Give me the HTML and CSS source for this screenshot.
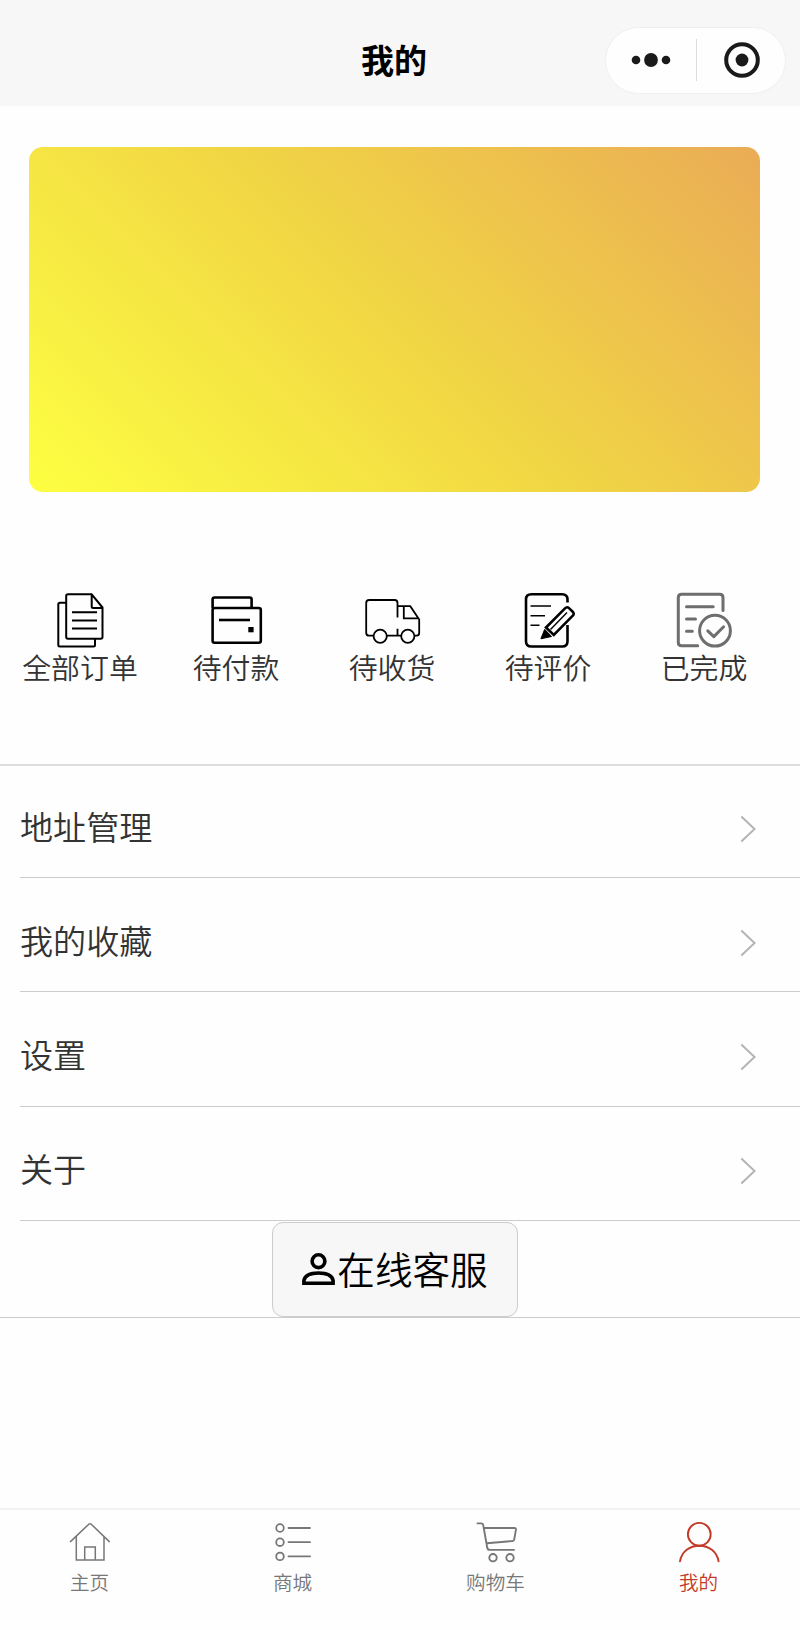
FILE: index.html
```
<!DOCTYPE html>
<html lang="zh-CN">
<head>
    <meta charset="UTF-8">
    <meta name="viewport" content="width=device-width, initial-scale=1.0">
    <title>我的</title>
    <link rel="stylesheet" href="styles.css">
</head>
<body>
    <div class="page">
        <header class="navbar">
            <h1 class="navbar-title">我的</h1>
            <div class="capsule">
                <svg class="capsule-icon" width="40" height="40" viewBox="0 0 40 40" fill="#1a1a1a">
                    <circle cx="5" cy="20" r="4.3"/>
                    <circle cx="20" cy="20" r="6.9"/>
                    <circle cx="35" cy="20" r="4.3"/>
                </svg>
                <span class="capsule-line"></span>
                <svg class="capsule-icon" width="40" height="40" viewBox="0 0 40 40">
                    <circle cx="20" cy="20" r="15.8" fill="none" stroke="#1a1a1a" stroke-width="4"/>
                    <circle cx="20" cy="20" r="6.4" fill="#1a1a1a"/>
                </svg>
            </div>
        </header>

        <main class="content">
            <div class="card"></div>

            <div class="orders">
                <a class="order">
                    <svg class="order-icon" viewBox="0 0 60 60" stroke-width="2">
                        <path d="M16 12.7H10q-1.7 0-1.7 1.7V55q0 1.5 1.7 1.5H43.5q1.5 0 1.5-1.5v-6.5"/>
                        <path d="M41.7 4.3H18q-1.8 0-1.8 1.8V47q0 1.7 1.8 1.7H50.7q1.8 0 1.8-1.7V17.5L41.7 4.3V16.5q0 1.5 1.5 1.5H52.5" stroke-linejoin="round"/>
                        <path d="M22 22.3H47M22 30.4H47M22 38.5H47"/>
                    </svg>
                    <span>全部订单</span>
                </a>
                <a class="order">
                    <svg class="order-icon" viewBox="0 0 60 60" stroke-width="2.6">
                        <path d="M6.6 18V9.5q0-2 2-2H43.6q2 0 2 2V18"/>
                        <rect x="6.6" y="18" width="48.2" height="34.8" rx="2"/>
                        <path d="M13 30H44"/>
                        <rect x="42.3" y="37" width="5.3" height="5.3" fill="#000" stroke="none"/>
                    </svg>
                    <span>待付款</span>
                </a>
                <a class="order">
                    <svg class="order-icon" viewBox="0 0 60 60" stroke-width="1.8">
                        <path d="M11.6 45.7H7.2q-3 0-3-3V13q0-3 3-3H32.7q2.8 0 2.8 3V27.5M35.5 38.7v7M24.8 45.7H39.2M35.5 16.2H48.3L57.2 29.5V43q0 2.7-2.7 2.7H52.4M41.8 16.2V28.3H56.6"/>
                        <circle cx="18.2" cy="46.3" r="6.6"/>
                        <circle cx="45.8" cy="46.3" r="6.6"/>
                    </svg>
                    <span>待收货</span>
                </a>
                <a class="order">
                    <svg class="order-icon" viewBox="0 0 60 60" stroke-width="2.6">
                        <path d="M49.500 12.5V9.5q0-5.3-5.3-5.3H13.500q-5.5 0-5.5 5.3V51.2q0 5.3 5.5 5.3H44.200q5.3 0 5.3-5.3V35"/>
                        <path d="M12.500 16H33M12.500 25.7H27M12.500 35.3H21.500" stroke-width="1.6"/>
                        <path d="M28 37.5 47 18.3q2-2 4-.2l3.7 3.6q2 2 .1 3.9L35.800 45Z"/>
                        <path d="M32.500 39.6 49 22.6" stroke-width="1.4"/>
                        <path d="M26.700 39.3 33.500 46.5 22.900 48.8Z" fill="#000" stroke-width="1"/>
                    </svg>
                    <span>待评价</span>
                </a>
                <a class="order">
                    <svg class="order-icon order-icon-done" viewBox="0 0 60 60" stroke-width="3">
                        <path d="M49 20.5V7.5q0-3.3-3.3-3.3H7.6Q4.3 4.2 4.3 7.5V52.4q0 3.3 3.3 3.3H23.7M12.5 16.7H39.2M12.5 29H21.5M12.5 41.3H18.3"/>
                        <circle cx="41" cy="40.7" r="15.4"/>
                        <path d="M33.8 40.8 39.8 46.6 49.6 36.8"/>
                    </svg>
                    <span>已完成</span>
                </a>
            </div>

            <div class="menu">
                <a class="menu-item"><span>地址管理</span>
                    <svg class="arrow" viewBox="0 0 16 28"><path d="M1.3 1.5 14.6 14 1.3 26.5"/></svg>
                </a>
                <a class="menu-item"><span>我的收藏</span>
                    <svg class="arrow" viewBox="0 0 16 28"><path d="M1.3 1.5 14.6 14 1.3 26.5"/></svg>
                </a>
                <a class="menu-item"><span>设置</span>
                    <svg class="arrow" viewBox="0 0 16 28"><path d="M1.3 1.5 14.6 14 1.3 26.5"/></svg>
                </a>
                <a class="menu-item"><span>关于</span>
                    <svg class="arrow" viewBox="0 0 16 28"><path d="M1.3 1.5 14.6 14 1.3 26.5"/></svg>
                </a>
                <div class="service">
                    <button class="service-button">
                        <svg class="service-icon" viewBox="0 0 34 36">
                            <circle cx="17.5" cy="9.2" r="6.4"/>
                            <path d="M2.9 31.2V28.5C3.9 23.5 9.5 21 17.5 21S31.1 23.5 32.1 28.5V31.2Z"/>
                        </svg>
                        <span>在线客服</span>
                    </button>
                </div>
            </div>
        </main>

        <nav class="tabbar">
            <a class="tab">
                <svg class="tab-icon" viewBox="0 0 44 44" stroke-width="1.5">
                    <path d="M2.5 21.6 20.8 4.2q1.2-1 2.4 0L41.3 21.6M8.3 16.5V40H36V16.5M16.7 40V27H27.3V40"/>
                </svg>
                <span>主页</span>
            </a>
            <a class="tab">
                <svg class="tab-icon" viewBox="0 0 44 44" stroke-width="1.8">
                    <circle cx="9" cy="8" r="3.8"/>
                    <circle cx="9" cy="22.2" r="3.8"/>
                    <circle cx="9" cy="36.4" r="3.8"/>
                    <path d="M17.5 8H39M17.5 22.2H39M17.5 36.4H39"/>
                </svg>
                <span>商城</span>
            </a>
            <a class="tab">
                <svg class="tab-icon" viewBox="0 0 44 44" stroke-width="1.9">
                    <path d="M3.5 3.4H7q2 0 2.3 2L13.2 27.5q.4 2.4 2.8 2.4H40M10 8H40.3q1.9 0 1.6 1.9L40.2 19.3q-.3 1.5-1.8 1.7L12.7 23.2"/>
                    <circle cx="19" cy="37.7" r="3.7"/>
                    <circle cx="36" cy="37.7" r="3.7"/>
                </svg>
                <span>购物车</span>
            </a>
            <a class="tab tab-active">
                <svg class="tab-icon" viewBox="0 0 44 44" stroke-width="1.9">
                    <circle cx="22.3" cy="14.3" r="11.4"/>
                    <path d="M3 41.4C4.7 31.5 12.7 25.7 22.3 25.7S39.9 31.5 41.6 41.4"/>
                </svg>
                <span>我的</span>
            </a>
        </nav>
    </div>
</body>
</html>
```
FILE: styles.css
```
* {
    box-sizing: border-box;
}
body {
    margin: 0;
    background: #fefefe;
    color: #333;
    font-family: "Noto Sans CJK SC", sans-serif;
    font-weight: 350;
}
.page {
    display: flex;
    flex-direction: column;
    height: 1630px;
    overflow: hidden;
}
svg {
    display: block;
    flex: none;
}

/* header */
.navbar {
    display: grid;
    grid-template-columns: 1fr auto 1fr;
    align-items: center;
    height: 106px;
    padding: 14px 14px 0 2px;
    background: #f7f7f7;
}
.navbar-title {
    grid-column: 2;
    margin: 0;
    padding-bottom: 3px;
    font-size: 33px;
    line-height: 48px;
    font-weight: 700;
    color: #000;
}
.capsule {
    display: flex;
    align-items: center;
    justify-content: space-between;
    justify-self: end;
    width: 181px;
    height: 67px;
    padding: 0 23px 0 25px;
    border: 1px solid #efefef;
    border-radius: 34px;
    background: #fefefe;
}
.capsule-line {
    width: 1px;
    height: 42px;
    background: #ddd;
}

.content {
    flex: 1;
}
.card {
    height: 345px;
    margin: 41px 40px 0 29px;
    border-radius: 14px;
    background: linear-gradient(45deg, #fdff42, #f1d644 50%, #eaac56);
}

/* orders */
.orders {
    display: grid;
    grid-template-columns: repeat(5, 1fr);
    margin: 98px 18px 0 2px;
}
.order {
    display: flex;
    flex-direction: column;
    align-items: center;
    font-size: 28.9px;
    line-height: 32px;
}
.order-icon {
    width: 60px;
    height: 60px;
    fill: none;
    stroke: #000;
}
.order-icon-done {
    stroke: #6e6e6e;
    stroke-linecap: round;
    stroke-linejoin: round;
}

/* menu */
.menu {
    margin-top: 82px;
    border-top: 2px solid #ddd;
    border-bottom: 1px solid #ccc;
}
.menu-item {
    display: flex;
    align-items: center;
    justify-content: space-between;
    height: 114.4px;
    margin-left: 20px;
    padding: 16px 44px 0 0;
    border-bottom: 1px solid #ccc;
    font-size: 33.1px;
    line-height: 48px;
}
.menu-item span {
    padding-bottom: 6px;
}
.menu-item:first-child {
    height: 112px;
    padding-top: 14px;
}
.arrow {
    width: 16px;
    height: 28px;
    fill: none;
    stroke: #b4b4b4;
    stroke-width: 2;
}
.service {
    display: flex;
    justify-content: center;
    padding: 1px 11px 0 0;
}
.service-button {
    display: flex;
    align-items: center;
    justify-content: center;
    width: 246px;
    height: 95px;
    padding: 0;
    border: 1px solid #ccc;
    border-radius: 11px;
    background: #f7f7f7;
    color: #000;
    font-family: inherit;
    font-size: 37.6px;
    font-weight: inherit;
    line-height: 54px;
}
.service-button span {
    padding: 0 0 4px 2px;
}
.service-icon {
    width: 34px;
    height: 36px;
    fill: none;
    stroke: #000;
    stroke-width: 3.6;
}

/* bottom tabs */
.tabbar {
    display: grid;
    grid-template-columns: repeat(4, 1fr);
    height: 122px;
    margin: 0 0 0 -12px;
    padding-top: 10px;
    border-top: 2px solid #f2f2f2;
    color: #777;
}
.tab {
    display: flex;
    flex-direction: column;
    align-items: center;
    font-size: 19.6px;
    line-height: 36px;
}
.tab-icon {
    width: 44px;
    height: 44px;
    fill: none;
    stroke: currentColor;
    stroke-linecap: round;
}
.tab-active {
    color: #c23a28;
}
```
